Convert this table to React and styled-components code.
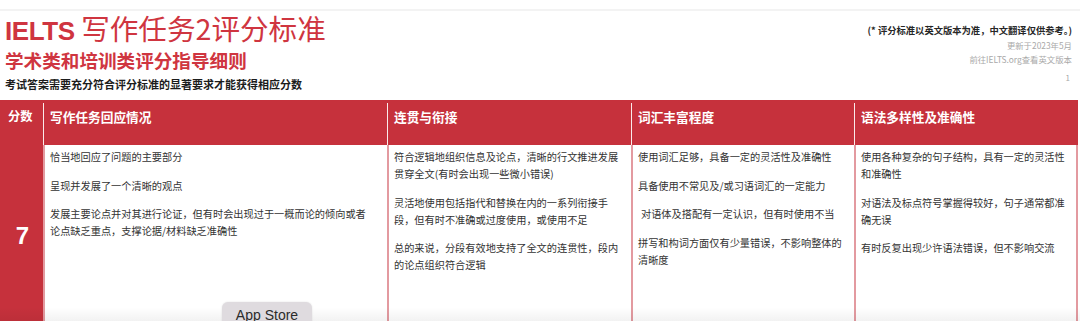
import React from "react";
import styled, { createGlobalStyle } from "styled-components";

const GlobalStyle = createGlobalStyle`
  html, body {
    margin: 0;
    padding: 0;
    background: #ffffff;
  }
  body {
    font-family: "Liberation Sans", "Noto Sans CJK SC", sans-serif;
  }
`;

const RED = "#c6313c";
const TITLE_RED = "#cf3540";
const CJK = `"Noto Sans CJK SC", "Liberation Sans", sans-serif`;

const columns = [
  {
    title: "写作任务回应情况",
    items: [
      ["恰当地回应了问题的主要部分"],
      ["呈现并发展了一个清晰的观点"],
      [
        "发展主要论点并对其进行论证，但有时会出现过于一概而论的倾向或者",
        "论点缺乏重点，支撑论据/材料缺乏准确性",
      ],
    ],
  },
  {
    title: "连贯与衔接",
    items: [
      ["符合逻辑地组织信息及论点，清晰的行文推进发展", "贯穿全文(有时会出现一些微小错误)"],
      ["灵活地使用包括指代和替换在内的一系列衔接手", "段，但有时不准确或过度使用，或使用不足"],
      ["总的来说，分段有效地支持了全文的连贯性，段内", "的论点组织符合逻辑"],
    ],
  },
  {
    title: "词汇丰富程度",
    items: [
      ["使用词汇足够，具备一定的灵活性及准确性"],
      ["具备使用不常见及/或习语词汇的一定能力"],
      ["对语体及搭配有一定认识，但有时使用不当"],
      ["拼写和构词方面仅有少量错误，不影响整体的", "清晰度"],
    ],
  },
  {
    title: "语法多样性及准确性",
    items: [
      ["使用各种复杂的句子结构，具有一定的灵活性", "和准确性"],
      ["对语法及标点符号掌握得较好，句子通常都准", "确无误"],
      ["有时反复出现少许语法错误，但不影响交流"],
    ],
  },
];

export default function App() {
  return (
    <>
      <GlobalStyle />
      <Page>
        <TopStrip />
        <Header>
          <TitleBlock>
            <Title>
              <Brand>IELTS</Brand> 写作任务2评分标准
            </Title>
            <Subtitle>学术类和培训类评分指导细则</Subtitle>
            <Lead>考试答案需要充分符合评分标准的显著要求才能获得相应分数</Lead>
          </TitleBlock>
          <Notes>
            <Disclaimer>(* 评分标准以英文版本为准，中文翻译仅供参考。)</Disclaimer>
            <Meta>更新于2023年5月</Meta>
            <Meta>前往IELTS.org查看英文版本</Meta>
            <PageNo>1</PageNo>
          </Notes>
        </Header>

        <Table>
          <ScoreHead>分数</ScoreHead>
          {columns.map((col) => (
            <HeadCell key={col.title}>{col.title}</HeadCell>
          ))}
          <ScoreCell>7</ScoreCell>
          {columns.map((col, ci) => (
            <BodyCell key={col.title} $last={ci === columns.length - 1}>
              {col.items.map((lines, i) => (
                <Para key={i} $indent={ci === 2 && i === 2}>
                  {lines.map((line, j) => (
                    <React.Fragment key={j}>
                      {j > 0 && <br />}
                      {line}
                    </React.Fragment>
                  ))}
                </Para>
              ))}
            </BodyCell>
          ))}
        </Table>

        <BottomFade />
        <StoreBadge>App Store</StoreBadge>
      </Page>
    </>
  );
}

const Page = styled.div`
  position: relative;
  width: 1080px;
  height: 321px;
  overflow: hidden;
  background: #fff;
`;

const TopStrip = styled.div`
  height: 9px;
  border-bottom: 2px solid #f3f3f3;
`;

const Header = styled.div`
  display: flex;
  justify-content: space-between;
  align-items: flex-start;
  padding: 0 8px 0 5px;
`;

const TitleBlock = styled.div`
  display: flex;
  flex-direction: column;
`;

const Title = styled.div`
  font-family: ${CJK};
  font-size: 28.6px;
  line-height: 34px;
  color: ${TITLE_RED};
  font-weight: 400;
  white-space: nowrap;
`;

const Brand = styled.span`
  font-family: "Liberation Sans", sans-serif;
  font-weight: 700;
  font-size: 26px;
  letter-spacing: -0.4px;
`;

const Subtitle = styled.div`
  font-family: ${CJK};
  font-size: 18.6px;
  line-height: 24px;
  font-weight: 700;
  color: ${TITLE_RED};
`;

const Lead = styled.div`
  margin-top: 3px;
  font-family: ${CJK};
  font-size: 11px;
  line-height: 18px;
  font-weight: 700;
  color: #1c1c1c;
`;

const Notes = styled.div`
  display: flex;
  flex-direction: column;
  align-items: flex-end;
  padding-top: 11px;
  font-family: ${CJK};
`;

const Disclaimer = styled.div`
  font-size: 9.3px;
  line-height: 16px;
  font-weight: 700;
  color: #262626;
`;

const Meta = styled.div`
  font-size: 8.4px;
  line-height: 14px;
  color: #a9a9a9;
`;

const PageNo = styled(Meta)`
  margin-top: 6px;
  font-size: 8px;
  line-height: 12px;
  padding-right: 2px;
`;

const Table = styled.div`
  display: grid;
  grid-template-columns: 43px 344px 244px 223px 224px;
  grid-template-rows: 45px 182px;
  margin-top: 7px;
  width: 1078px;
  background: ${RED};
`;

const ScoreHead = styled.div`
  padding: 8px 0 0 8px;
  font-family: ${CJK};
  font-size: 12.3px;
  line-height: 17px;
  font-weight: 700;
  color: #fff;
`;

const HeadCell = styled.div`
  border-left: 1.5px solid #fbeaea;
  margin-top: 3px;
  padding: 5px 6px 0 6px;
  font-family: ${CJK};
  font-size: 12.7px;
  line-height: 17px;
  font-weight: 700;
  color: #fff;
`;

const ScoreCell = styled.div`
  display: flex;
  align-items: center;
  justify-content: center;
  padding-left: 2px;
  font-family: "Liberation Sans", sans-serif;
  font-size: 24px;
  font-weight: 700;
  color: #fff;
`;

const BodyCell = styled.div`
  background: #fff;
  border-left: 2px solid #e39aa0;
  border-right: ${(p) => (p.$last ? "2px solid #e39aa0" : "none")};
  padding: 3px 4px 0 5px;
  font-family: ${CJK};
  font-size: 10.2px;
  line-height: 17px;
  color: #333333;
  white-space: nowrap;
`;

const Para = styled.p`
  margin: 0 0 11.5px 0;
  padding-left: ${(p) => (p.$indent ? "3px" : "0")};
`;

const BottomFade = styled.div`
  position: absolute;
  left: 0;
  right: 0;
  bottom: 0;
  height: 14px;
  background: linear-gradient(rgba(0, 0, 0, 0), rgba(0, 0, 0, 0.05));
  pointer-events: none;
`;

const StoreBadge = styled.div`
  position: absolute;
  left: 222px;
  top: 302px;
  width: 90px;
  height: 28px;
  display: flex;
  justify-content: center;
  padding-top: 5px;
  box-sizing: border-box;
  border-radius: 6px;
  background: #dfdbdf;
  box-shadow: 0 0 2px rgba(0, 0, 0, 0.12);
  font-family: "Liberation Sans", sans-serif;
  font-size: 14px;
  line-height: 16px;
  color: #2b2b2b;
`;
